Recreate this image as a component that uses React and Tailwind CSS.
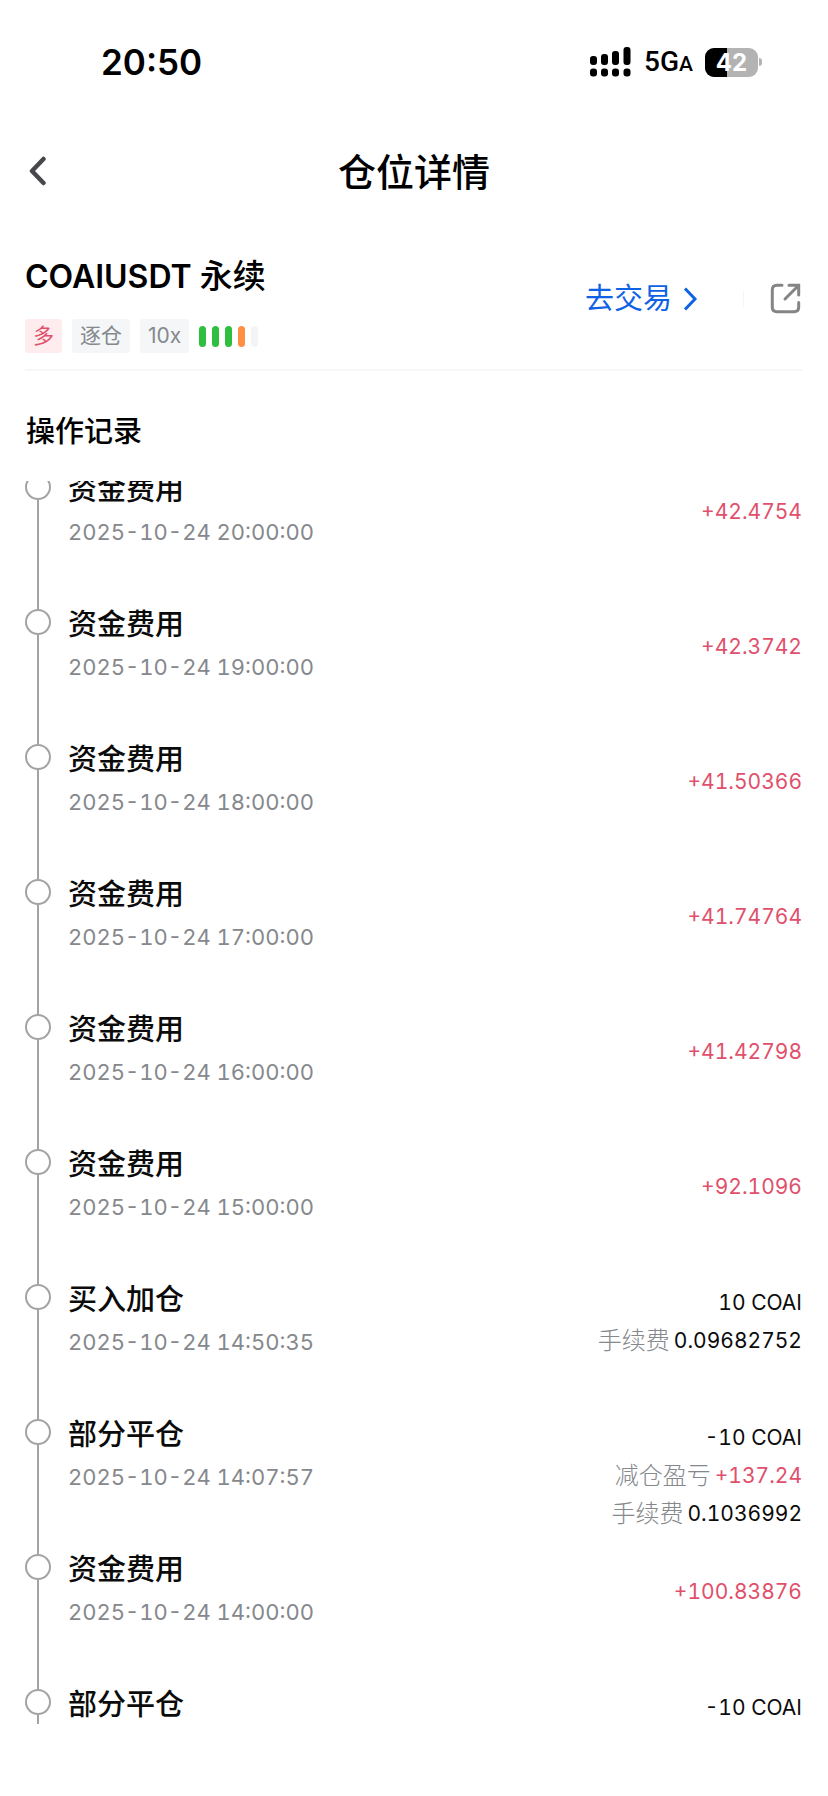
import clsx from 'clsx'

const RECORDS = [
  { title: '资金费用', time: '2025-10-24 20:00:00', amount: '+42.4754' },
  { title: '资金费用', time: '2025-10-24 19:00:00', amount: '+42.3742' },
  { title: '资金费用', time: '2025-10-24 18:00:00', amount: '+41.50366' },
  { title: '资金费用', time: '2025-10-24 17:00:00', amount: '+41.74764' },
  { title: '资金费用', time: '2025-10-24 16:00:00', amount: '+41.42798' },
  { title: '资金费用', time: '2025-10-24 15:00:00', amount: '+92.1096' },
  { title: '买入加仓', time: '2025-10-24 14:50:35', qty: '10 COAI', fee: '0.09682752' },
  { title: '部分平仓', time: '2025-10-24 14:07:57', qty: '-10 COAI', pnl: '+137.24', fee: '0.1036992' },
  { title: '资金费用', time: '2025-10-24 14:00:00', amount: '+100.83876' },
  { title: '部分平仓', qty: '-10 COAI' },
]

const RISK_BARS = ['bg-[#2fbf3f]', 'bg-[#2fbf3f]', 'bg-[#2fbf3f]', 'bg-[#ff8f45]', 'bg-[#f4f4f4]']

function SignalIcon() {
  return (
    <svg width="42" height="30" viewBox="0 0 42 30" aria-hidden="true">
      <rect x="0" y="9" width="7" height="9" rx="3"/>
      <rect x="11" y="7" width="7" height="11" rx="3"/>
      <rect x="22" y="4" width="7" height="14" rx="3"/>
      <rect x="33.500" y="0" width="7" height="18" rx="3"/>
      <rect x="0" y="21.500" width="7" height="8" rx="3"/>
      <rect x="11" y="21.500" width="7" height="8" rx="3"/>
      <rect x="22" y="21.500" width="7" height="8" rx="3"/>
      <rect x="33.500" y="21.500" width="7" height="8" rx="3"/>
    </svg>
  )
}

function Battery({ level }) {
  return (
    <div className="flex items-center gap-px">
      <div className="relative flex h-[29px] w-[53px] items-center justify-center overflow-hidden rounded-[9px] bg-[#b3b3b3]">
        <div className="absolute inset-y-0 left-0 bg-black" style={{ width: `${level}%` }}/>
        <span className="relative text-[24px] leading-[29px] font-bold text-white">{level}</span>
      </div>
      <div className="h-2 w-[3px] rounded-r-full bg-[#b3b3b3]"/>
    </div>
  )
}

function StatusBar() {
  return (
    <div className="flex h-[124px] items-center justify-between pr-[66px] pl-[101px]">
      <div className="text-[35px] font-semibold">20:50</div>
      <div className="flex items-center gap-3">
        <SignalIcon/>
        <div className="font-[Roboto,sans-serif] text-[28px] font-medium">5G<span className="text-[21px]">A</span></div>
        <Battery level={42}/>
      </div>
    </div>
  )
}

function Tag({ children, long }) {
  return (
    <span className={clsx('flex h-[34px] items-center rounded-[3px] px-2 text-[21px]', long ? 'bg-[#ffecee] text-[#e0506c]' : 'bg-[#f4f6f8] text-[#85888c]')}>
      {children}
    </span>
  )
}

function ValueLine({ label, value, up }) {
  return (
    <div className="flex items-center justify-end gap-1 text-[21px] leading-[38px]">
      {label && <span className="text-[24px] font-light text-[#85888c]">{label}</span>}
      <span className={clsx('tabular-nums', up ? 'text-[#e0506c]' : 'text-[#0b0b0b]')}>{value}</span>
    </div>
  )
}

function RecordRow({ record }) {
  const { title, time, amount, qty, pnl, fee } = record
  return (
    <li className="flex h-[135px]">
      <div className="flex w-[26px] shrink-0 flex-col items-center">
        <div className="size-[26px] shrink-0 rounded-full border-2 border-[#a3a3a3]"/>
        <div className="w-0.5 flex-1 bg-[#a3a3a3]"/>
      </div>
      <div className="ml-[17px] flex-1">
        <h3 className="text-[29px] leading-8 font-medium text-[#0b0b0b]">{title}</h3>
        {time && <time className="mt-3 block text-[22px] leading-7 text-[#85888c] tabular-nums">{time}</time>}
      </div>
      <div className={clsx('flex h-[76px] flex-col', amount && 'justify-center')}>
        {amount && <ValueLine value={amount} up/>}
        {qty && <ValueLine value={qty}/>}
        {pnl && <ValueLine label="减仓盈亏" value={pnl} up/>}
        {fee && <ValueLine label="手续费" value={fee}/>}
      </div>
    </li>
  )
}

export default function App() {
  return (
    <div className="flex h-screen flex-col overflow-hidden bg-white pb-[72px] font-['Inter','Noto_Sans_CJK_SC',sans-serif] text-black">
      <StatusBar/>

      <header className="grid h-24 grid-cols-[1fr_auto_1fr] items-center px-[25px]">
        <button type="button" aria-label="返回" className="w-6">
          <svg width="24" height="32" viewBox="0 0 24 32" fill="none" stroke="#48484c" strokeWidth="4.500" strokeLinecap="round" strokeLinejoin="round">
            <path d="M18.500 3 L7 15 L18.500 27"/>
          </svg>
        </button>
        <h1 className="text-[38px] leading-10 font-medium">仓位详情</h1>
      </header>

      <section className="mr-[26px] ml-[25px] flex items-center justify-between border-b-2 border-[#f7f7f8] pt-6 pb-4">
        <div>
          <h2 className="pt-0.5 text-[32px] leading-[60px] font-semibold">COAIUSDT <span className="text-[33px] font-medium">永续</span></h2>
          <div className="mt-3 flex items-center gap-2.5">
            <Tag long>多</Tag>
            <Tag>逐仓</Tag>
            <Tag>10x</Tag>
            <div className="flex gap-1.5">
              {RISK_BARS.map((color, i) => (
                <span key={i} className={clsx('h-[21px] w-[7px] rounded-full', color)}/>
              ))}
            </div>
          </div>
        </div>
        <div className="flex items-center">
          <a href="#trade" className="flex items-center gap-2.5 text-[29px] text-[#0f62e6]">
            去交易
            <svg width="16" height="24" viewBox="0 0 16 24" fill="none" stroke="currentColor" strokeWidth="3">
              <path d="M3 1.500 L13 12 L3 22.500"/>
            </svg>
          </a>
          <span className="ml-[45px] h-4 w-px bg-[#f6f6f7]"/>
          <button type="button" aria-label="分享" className="ml-[26px]">
            <svg width="32" height="32" viewBox="0 0 32 32" fill="none" stroke="#858585" strokeWidth="3" strokeLinecap="round">
              <path d="M12 2.300 H7 Q2.300 2.300 2.300 7 V24 Q2.300 28.700 7 28.700 H24 Q28.700 28.700 28.700 24 V19.500"/>
              <path d="M19 2.300 H28.700 V12 M28 3 L15 16"/>
            </svg>
          </button>
        </div>
      </section>

      <h2 className="mx-[26px] mt-[42px] mb-[30px] text-[29px] leading-[38px] font-medium">操作记录</h2>

      {/* the list runs on under both edges of its scroll area */}
      <div className="min-h-0 flex-1 overflow-hidden">
        <ul className="-mt-[7px] mr-[26px] ml-[25px]">
          {RECORDS.map((record, i) => <RecordRow key={i} record={record}/>)}
        </ul>
      </div>
    </div>
  )
}
